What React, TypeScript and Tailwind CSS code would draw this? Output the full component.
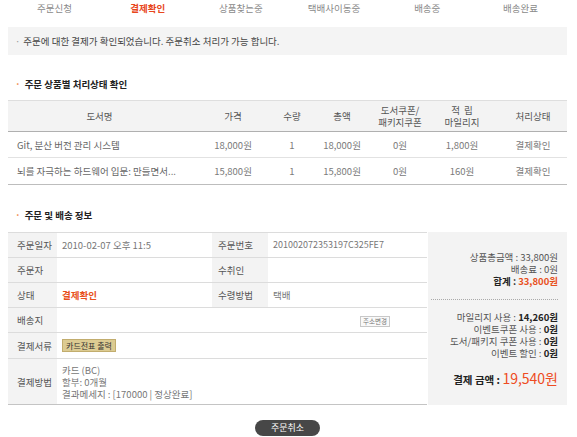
import React from "react";

const navItems = ["주문신청", "결제확인", "상품찾는중", "택배사이동중", "배송중", "배송완료"];

function Bullet({ color = "#f08a4b" }: { color?: string }) {
  return <span className="mr-[4px]" style={{ color }}>·</span>;
}

export default function App() {
  const cols = "grid grid-cols-[183px_84px_34px_66px_50px_74px_68px]";
  return (
    <div className="w-[577px] h-[437px] bg-white pl-[8px] pr-[10px] font-['Noto_Sans_CJK_KR',sans-serif] text-[9.5px] leading-[12px] text-[#777]">
      {/* step nav */}
      <div className="grid grid-cols-6 h-[15px] items-center text-center text-[#8a8a8a]">
        {navItems.map((n, i) => (
          <div key={n} className={i === 1 ? "font-bold text-[#e8461c]" : ""}>
            {n}
          </div>
        ))}
      </div>

      {/* notice */}
      <div className="mt-[12px] h-[28px] bg-[#f4f4f4] flex items-center pl-[7px] text-[#444]">
        <span className="mr-[3px] text-[#999]">·</span>주문에 대한 결제가 확인되었습니다. 주문취소 처리가 가능 합니다.
      </div>

      {/* title 1 */}
      <div className="mt-[23px] h-[12px] flex items-center pl-[7px] font-bold text-[#222]">
        <Bullet />주문 상품별 처리상태 확인
      </div>

      {/* product table */}
      <div className="mt-[10px]">
        <div className={`${cols} h-[32px] bg-[#f3f3f3] border-t border-[#dedede] border-b border-b-[#b0b0b0] items-center text-center text-[#555] leading-[12px]`}>
          <div>도서명</div>
          <div>가격</div>
          <div>수량</div>
          <div>총액</div>
          <div>도서쿠폰/<br />패키지쿠폰</div>
          <div>적&nbsp;&nbsp;립<br />마일리지</div>
          <div>처리상태</div>
        </div>
        {[
          ["Git, 분산 버전 관리 시스템", "18,000원", "1", "18,000원", "0원", "1,800원", "결제확인"],
          ["뇌를 자극하는 하드웨어 입문: 만들면서...", "15,800원", "1", "15,800원", "0원", "160원", "결제확인"],
        ].map((r, i) => (
          <div
            key={i}
            className={`${cols} ${i === 0 ? "h-[26px] border-b border-[#e2e2e2]" : "h-[27px] border-b border-[#bdbdbd]"} items-center text-center text-[#7a7a7a]`}
          >
            <div className="text-left pl-[9px] text-[#666]">{r[0]}</div>
            {r.slice(1).map((c, j) => (
              <div key={j}>{c}</div>
            ))}
          </div>
        ))}
      </div>

      {/* title 2 */}
      <div className="mt-[24px] h-[12px] flex items-center pl-[7px] font-bold text-[#222]">
        <Bullet />주문 및 배송 정보
      </div>

      {/* info table */}
      <div className="mt-[11px] flex">
        <div className="w-[419px] border-t border-[#dcdcdc]">
          <div className="flex h-[25px] border-b border-[#dcdcdc]">
            <div className="w-[49px] bg-[#f3f3f3] pl-[9px] flex items-center text-[#555]">주문일자</div>
            <div className="w-[155px] pl-[5px] flex items-center">2010-02-07 오후 11:5</div>
            <div className="w-[56px] bg-[#f3f3f3] pl-[6px] flex items-center text-[#555]">주문번호</div>
            <div className="flex-1 pl-[5px] flex items-center text-[9px]">201002072353197C325FE7</div>
          </div>
          <div className="flex h-[25px] border-b border-[#dcdcdc]">
            <div className="w-[49px] bg-[#f3f3f3] pl-[9px] flex items-center text-[#555]">주문자</div>
            <div className="w-[155px] pl-[5px] flex items-center"></div>
            <div className="w-[56px] bg-[#f3f3f3] pl-[6px] flex items-center text-[#555]">수취인</div>
            <div className="flex-1 pl-[5px] flex items-center"></div>
          </div>
          <div className="flex h-[25px] border-b border-[#dcdcdc]">
            <div className="w-[49px] bg-[#f3f3f3] pl-[9px] flex items-center text-[#555]">상태</div>
            <div className="w-[155px] pl-[5px] flex items-center font-bold text-[#e8501c]">결제확인</div>
            <div className="w-[56px] bg-[#f3f3f3] pl-[6px] flex items-center text-[#555]">수령방법</div>
            <div className="flex-1 pl-[5px] flex items-center">택배</div>
          </div>
          <div className="flex h-[25px] border-b border-[#dcdcdc]">
            <div className="w-[49px] bg-[#f3f3f3] pl-[9px] flex items-center text-[#555]">배송지</div>
            <div className="flex-1 flex items-center justify-end pr-[37px] pt-[3px]">
              <span className="h-[11px] w-[30px] border border-[#c8c8c8] bg-[#f9f9f9] text-[6.5px] leading-[9px] text-center text-[#777]">주소변경</span>
            </div>
          </div>
          <div className="flex h-[26px] border-b border-[#dcdcdc]">
            <div className="w-[49px] bg-[#f3f3f3] pl-[9px] flex items-center text-[#555]">결제서류</div>
            <div className="flex-1 pl-[5px] flex items-center">
              <span className="h-[13px] w-[54px] border border-[#c2ad6e] bg-[#dccb92] text-[8px] leading-[11px] text-center text-[#333]">카드전표 출력</span>
            </div>
          </div>
          <div className="flex h-[46px] border-b border-[#c4c4c4]">
            <div className="w-[49px] bg-[#f3f3f3] pl-[9px] flex items-center text-[#555]">결제방법</div>
            <div className="flex-1 pl-[5px] flex flex-col justify-center leading-[12px]">
              <div>카드 (BC)</div>
              <div>할부: 0개월</div>
              <div>결과메세지 : [170000 | 정상완료]</div>
            </div>
          </div>
        </div>
        <div className="ml-[1px] w-[139px] bg-[#f3f3f3] pt-[19px] pr-[9px] text-right text-[#555]">
          <div>상품총금액 : 33,800원</div>
          <div>배송료 : 0원</div>
          <div className="font-bold text-[#222]">
            합계 : <span className="text-[#e8501c]">33,800원</span>
          </div>
          <div className="mt-[12px] ml-[3px] border-t border-dotted border-[#aaa]"></div>
          <div className="mt-[11px]">
            마일리지 사용 : <span className="font-bold text-[#222]">14,260원</span>
          </div>
          <div>
            이벤트쿠폰 사용 : <span className="font-bold text-[#222]">0원</span>
          </div>
          <div>
            도서/패키지 쿠폰 사용 : <span className="font-bold text-[#222]">0원</span>
          </div>
          <div>
            이벤트 할인 : <span className="font-bold text-[#222]">0원</span>
          </div>
          <div className="mt-[11px] leading-[16px] font-bold text-[#222] text-[10.5px]">
            결제 금액 : <span className="font-normal text-[14px] text-[#ee4b22]">19,540원</span>
          </div>
        </div>
      </div>

      {/* cancel button */}
      <div className="mt-[15px] flex justify-center">
        <div className="h-[16px] w-[65px] rounded-full bg-[#474747] text-white text-[9px] leading-[16px] text-center">주문취소</div>
      </div>
    </div>
  );
}
